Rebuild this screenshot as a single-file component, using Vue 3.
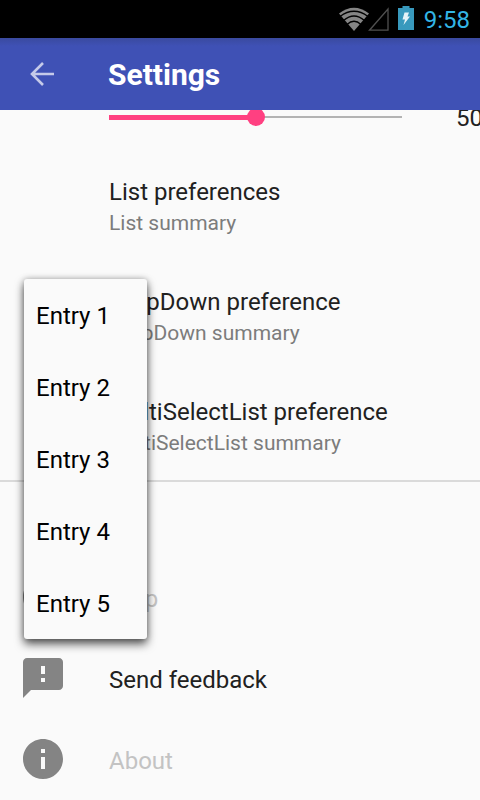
<script setup>
import { ref } from 'vue'

const level = ref(50)
const entries = ['Entry 1', 'Entry 2', 'Entry 3', 'Entry 4', 'Entry 5']
const preferences = [
  { title: 'List preferences', summary: 'List summary' },
  { title: 'DropDown preference', summary: 'DropDown summary' },
  { title: 'MultiSelectList preference', summary: 'MultiSelectList summary' },
]
const links = [
  {
    title: 'Help',
    disabled: true,
    icon: 'M12 2C6.48 2 2 6.48 2 12s4.48 10 10 10 10-4.48 10-10S17.52 2 12 2zm1 17h-2v-2h2v2zm2.07-7.75l-.9.92C13.45 12.9 13 13.5 13 15h-2v-.5c0-1.1.45-2.1 1.17-2.83l1.24-1.26c.37-.36.59-.86.59-1.41 0-1.1-.9-2-2-2s-2 .9-2 2H8c0-2.21 1.79-4 4-4s4 1.79 4 4c0 .88-.36 1.68-.93 2.25z',
  },
  {
    title: 'Send feedback',
    disabled: false,
    icon: 'M20 2H4c-1.1 0-2 .9-2 2v18l4-4h14c1.1 0 2-.9 2-2V4c0-1.1-.9-2-2-2zm-7 12h-2v-2h2v2zm0-4h-2V6h2v4z',
  },
  {
    title: 'About',
    disabled: true,
    icon: 'M12 2C6.48 2 2 6.48 2 12s4.48 10 10 10 10-4.48 10-10S17.52 2 12 2zm1 15h-2v-6h2v6zm0-8h-2V7h2v2z',
  },
]
</script>

<template>
  <div class="screen">
    <div class="status">
      <svg class="wifi" viewBox="0 0 32 24" width="32" height="24" aria-hidden="true">
        <path d="M0 6.500Q15-5 30 6.500L15 24Z" fill="#858585" />
        <path d="M1 9.500Q15-1 29 9.500M4.500 13.500Q15 4.500 25.500 13.500M8 17.500Q15 11 22 17.500" fill="none" stroke="#000" stroke-width="1.300" />
      </svg>
      <svg class="signal" viewBox="0 0 22 24" width="22" height="24" aria-hidden="true">
        <path d="M20 2V23.200H1.500Z" fill="none" stroke="#505050" stroke-width="1.300" />
      </svg>
      <svg class="battery" viewBox="0 0 16 24" width="16" height="24" aria-hidden="true">
        <path d="M4.500 0H11.500V2H16V24H0V2H4.500Z" fill="#3899bd" />
        <path d="M6.500 6.500H11L9.500 10.500H12L5.500 19L7 13.500H4.500Z" fill="#e6f3f8" />
      </svg>
      <span class="clock">9:58</span>
    </div>

    <header class="toolbar">
      <button class="back" type="button" aria-label="Back">
        <svg viewBox="0 0 24 24" width="24" height="24" aria-hidden="true">
          <path d="M24 12H2M13 1L2 12L13 23" fill="none" stroke="#c5cae9" stroke-width="2.600" />
        </svg>
      </button>
      <h1>Settings</h1>
    </header>

    <main class="content">
      <div class="seek">
        <input v-model="level" class="slider" type="range" min="0" max="100" aria-label="Level" />
        <output class="value">{{ level }}</output>
      </div>

      <section class="preferences">
        <button v-for="item in preferences" :key="item.title" class="preference" type="button">
          <span class="title">{{ item.title }}</span>
          <span class="summary">{{ item.summary }}</span>
        </button>
      </section>

      <section class="links">
        <button v-for="item in links" :key="item.title" class="link" type="button" :disabled="item.disabled">
          <svg viewBox="2 2 20 20" width="40" height="40" aria-hidden="true">
            <path :d="item.icon" fill="#848484" />
          </svg>
          <span class="title">{{ item.title }}</span>
        </button>
      </section>

      <div class="menu" role="menu">
        <button v-for="entry in entries" :key="entry" class="entry" type="button" role="menuitem">{{ entry }}</button>
      </div>
    </main>
  </div>
</template>

<style>
body {
  background: #fafafa;
}
</style>

<style scoped>
.screen {
  display: flex;
  flex-direction: column;
  height: 100vh;
  background: #fafafa;
  color: #212121;
  font-family: Roboto, "Liberation Sans", sans-serif;
  font-size: 24px;
}

button {
  margin: 0;
  padding: 0;
  border: 0;
  background: none;
  color: inherit;
  font: inherit;
  text-align: left;
}

svg {
  display: block;
}

.status {
  flex: none;
  display: flex;
  align-items: center;
  justify-content: flex-end;
  height: 38px;
  padding-right: 10px;
  background: #000;
}

.signal {
  margin-right: 8px;
  margin-left: -3px;
}

.battery {
  margin-right: 10px;
  margin-bottom: 2px;
}

.clock {
  padding-top: 2px;
  color: #33b5e5;
}

.toolbar {
  flex: none;
  display: flex;
  align-items: center;
  height: 72px;
  background: linear-gradient(#3a4a9f, #3f51b5 8px);
  color: #fff;
}

.back {
  flex: none;
  width: 108px;
  padding-left: 30px;
}

h1 {
  margin: 0;
  font-size: 30px;
  font-weight: 700;
}

.content {
  position: relative;
  flex: 1;
  min-height: 0;
  overflow: hidden;
}

.seek {
  display: flex;
  align-items: center;
  height: 70px;
  margin-top: -28px;
  padding-left: 109px;
}

.slider {
  flex: 1;
  min-width: 0;
  height: 18px;
  margin: 0;
  appearance: none;
  background:
    linear-gradient(#ff4081, #ff4081) left center / 50% 5px no-repeat,
    linear-gradient(#b3b3b3, #b3b3b3) center / 100% 2px no-repeat;
}

.slider::-webkit-slider-thumb {
  appearance: none;
  width: 18px;
  height: 18px;
  border-radius: 50%;
  background: #ff4081;
}

.value {
  width: 24px;
  margin-left: 54px;
  padding-top: 2px;
  white-space: nowrap;
}

.preference {
  display: flex;
  flex-direction: column;
  justify-content: center;
  width: 100%;
  height: 110px;
  padding-left: 109px;
}

.title {
  line-height: 32px;
}

.summary {
  color: #7c7c7c;
  font-size: 21px;
  line-height: 30px;
}

.links {
  margin-top: -2px;
  padding-top: 76px;
  border-top: 2px solid #dadada;
}

.link {
  display: flex;
  align-items: center;
  gap: 46px;
  width: 100%;
  height: 81px;
  padding-left: 23px;
}

.link svg {
  margin-bottom: 4px;
}

.link:disabled .title {
  color: #c3c3c3;
}

.menu {
  position: absolute;
  top: 169px;
  left: 24px;
  display: flex;
  flex-direction: column;
  width: 123px;
  border-radius: 3px;
  background: #fafafa;
  box-shadow: 0 5px 10px rgba(0, 0, 0, 0.65), 0 0 6px rgba(0, 0, 0, 0.25);
  color: #000;
}

.entry {
  height: 72px;
  padding: 2px 12px 0;
}
</style>
